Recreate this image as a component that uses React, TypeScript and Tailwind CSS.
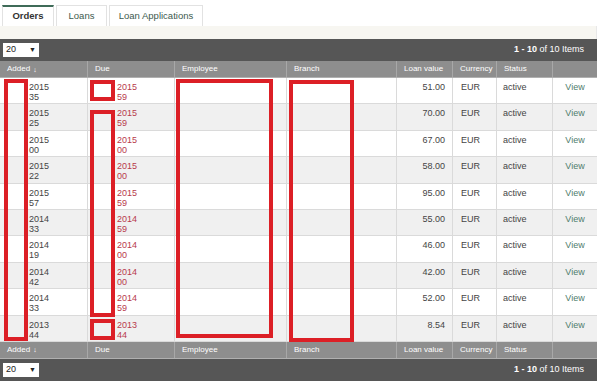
import React from "react";

const rows = [
  ["2015", "35", "2015", "59", "51.00"],
  ["2015", "25", "2015", "59", "70.00"],
  ["2015", "00", "2015", "00", "67.00"],
  ["2015", "22", "2015", "00", "58.00"],
  ["2015", "57", "2015", "59", "95.00"],
  ["2014", "33", "2014", "59", "55.00"],
  ["2014", "19", "2014", "00", "46.00"],
  ["2014", "42", "2014", "00", "42.00"],
  ["2014", "33", "2014", "59", "52.00"],
  ["2013", "44", "2013", "44", "8.54"],
];

const cols = [
  { w: "w-[88px]", label: "Added" },
  { w: "w-[87px]", label: "Due" },
  { w: "w-[112px]", label: "Employee" },
  { w: "w-[110px]", label: "Branch" },
  { w: "w-[56px]", label: "Loan value" },
  { w: "w-[44px]", label: "Currency" },
  { w: "w-[56px]", label: "Status" },
  { w: "flex-1", label: "" },
];

function HeaderRow() {
  return (
    <div className="flex h-[17px] bg-[#8e8e8e] text-white text-[8px] border-b border-[#b0b0b0]">
      {cols.map((c, i) => (
        <div
          key={i}
          className={`${c.w} flex items-center pl-[7px] ${i < cols.length - 1 ? "border-r border-[#a8a8a8]" : ""}`}
        >
          {c.label}
          {i === 0 && <span className="ml-[3px] text-[7px] leading-none">↓</span>}
        </div>
      ))}
    </div>
  );
}

function Pager() {
  return (
    <div className="flex h-[22px] items-center justify-between bg-[#565656] pl-[3px] pr-[13px]">
      <div className="flex h-[14px] w-[36px] items-center justify-between bg-white px-[3px] text-[9px] text-[#222]">
        <span>20</span>
        <span className="text-[7px]">▼</span>
      </div>
      <div className="text-[9px] text-white">
        <span className="font-bold">1 - 10</span> of 10 Items
      </div>
    </div>
  );
}

function Box({ cls }: { cls: string }) {
  return <div className={`absolute border-[4px] border-[#dc1f26] ${cls}`} />;
}

export default function App() {
  return (
    <div
      className="relative w-[601px] h-[381px] bg-white overflow-hidden"
      style={{ fontFamily: '"Liberation Sans", Arial, sans-serif' }}
    >
      <div className="w-[597px]">
        <div className="flex h-[26px] items-end pl-[2px] gap-[2px] pt-[5px]">
          <div className="flex h-[21px] w-[52px] items-center justify-center border-t-2 border-[#3f6b58] border-x border-x-[#e2e2e2] bg-white text-[9.5px] font-bold text-[#333]">
            Orders
          </div>
          <div className="flex h-[21px] w-[51px] items-center justify-center border border-[#e2e2e2] border-b-0 bg-white text-[9.5px] text-[#3d5a4e]">
            Loans
          </div>
          <div className="flex h-[21px] w-[94px] items-center justify-center border border-[#e2e2e2] border-b-0 bg-white text-[9.5px] text-[#3d5a4e]">
            Loan Applications
          </div>
        </div>
        <div className="h-[13px] bg-[#f7f6f1] border-r border-[#e8e8e8]" />
        <Pager />
        <HeaderRow />
        {rows.map((r, i) => (
          <div
            key={i}
            className={`flex h-[26.4px] border-b border-[#dadada] text-[9px] leading-[10px] text-[#444] ${i % 2 === 1 ? "bg-[#f0f0f0]" : "bg-white"}`}
          >
            <div className="w-[88px] pl-[29px] pt-[4px] border-r border-[#dadada]">
              <div>{r[0]}</div>
              <div>{r[1]}</div>
            </div>
            <div className="w-[87px] pl-[29px] pt-[4px] border-r border-[#dadada] text-[#b83a4c]">
              <div>{r[2]}</div>
              <div>{r[3]}</div>
            </div>
            <div className="w-[112px] border-r border-[#dadada]" />
            <div className="w-[110px] border-r border-[#dadada]" />
            <div className="w-[56px] pr-[7px] pt-[4px] text-right border-r border-[#dadada]">{r[4]}</div>
            <div className="w-[44px] pl-[8px] pt-[4px] border-r border-[#dadada]">EUR</div>
            <div className="w-[56px] pl-[6px] pt-[4px] border-r border-[#dadada]">active</div>
            <div className="flex-1 pt-[4px] text-center text-[#4f7d6c]">View</div>
          </div>
        ))}
        <HeaderRow />
        <Pager />
      </div>

      <Box cls="left-[4px] top-[79px] w-[24px] h-[262px]" />
      <Box cls="left-[90px] top-[80px] w-[25px] h-[21px]" />
      <Box cls="left-[90px] top-[110px] w-[25px] h-[207px]" />
      <Box cls="left-[90px] top-[319px] w-[25px] h-[21px]" />
      <Box cls="left-[176px] top-[79px] w-[97px] h-[259px]" />
      <Box cls="left-[289px] top-[80px] w-[65px] h-[262px]" />
    </div>
  );
}
